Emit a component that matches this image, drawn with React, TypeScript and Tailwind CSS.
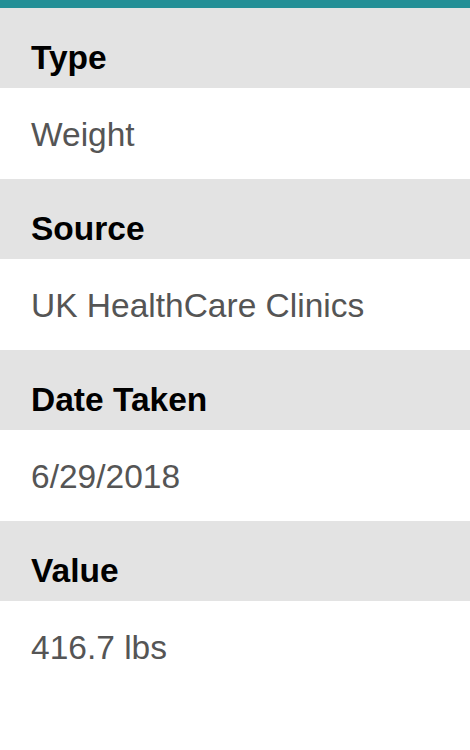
const rows = [
  { label: "Type", value: "Weight" },
  { label: "Source", value: "UK HealthCare Clinics" },
  { label: "Date Taken", value: "6/29/2018" },
  { label: "Value", value: "416.7 lbs" },
];

export default function App() {
  return (
    <div className="min-h-[750px] bg-white font-['Liberation_Sans',Arial,sans-serif]">
      <div className="h-[8px] bg-[#238f96]" />
      {rows.map((row) => (
        <div key={row.label}>
          <div className="h-[80px] bg-[#e3e3e3] flex items-center pl-[31px] pt-[20px]">
            <span className="text-[33.5px] leading-[40px] font-bold text-black">{row.label}</span>
          </div>
          <div className="h-[91px] flex items-center pl-[31px] pt-[2px]">
            <span className="text-[33.5px] leading-[40px] text-[#555555]">{row.value}</span>
          </div>
        </div>
      ))}
    </div>
  );
}
